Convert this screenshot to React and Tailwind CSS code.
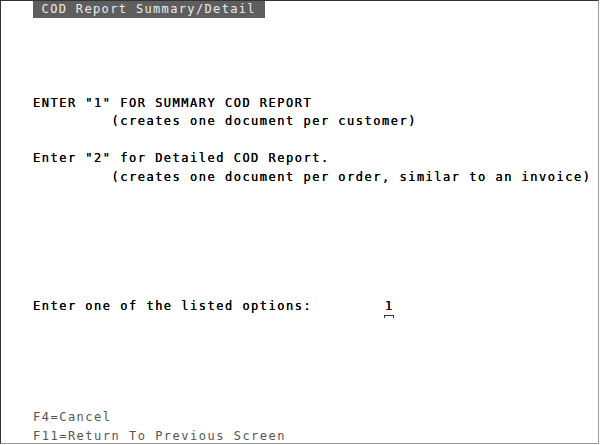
import React from "react";

const Row = ({ children, className = "" }) => (
  <div className={"h-[18.5px] leading-[18.5px] whitespace-pre " + className}>{children}</div>
);

export default function App() {
  return (
    <div className="w-[600px] h-[445px] bg-white">
      <div
        className="w-[599px] h-[444px] border-t border-l border-r border-b border-t-[#333] border-l-[#333] border-r-[#9a9a9a] border-b-[#9a9a9a] pl-[32px] text-[12px] tracking-[1.5px] text-black"
        style={{ fontFamily: '"DejaVu Sans Mono", "Liberation Mono", monospace' }}
      >
        <div className="h-[18.5px] flex items-start">
          <div className="h-[17px] leading-[17px] bg-[#5e5e5e] text-[#ececec] whitespace-pre tracking-[1.35px]">
            {" COD Report Summary/Detail "}
          </div>
        </div>
        <Row> </Row>
        <Row> </Row>
        <Row> </Row>
        <Row> </Row>
        <Row className="[text-shadow:0_0_0.25px_#000]">ENTER "1" FOR SUMMARY COD REPORT</Row>
        <Row className="[text-shadow:0_0_0.25px_#000]">{"         (creates one document per customer)"}</Row>
        <Row> </Row>
        <Row className="[text-shadow:0_0_0.25px_#000]">Enter "2" for Detailed COD Report.</Row>
        <Row className="[text-shadow:0_0_0.25px_#000]">{"         (creates one document per order, similar to an invoice)"}</Row>
        <Row> </Row>
        <Row> </Row>
        <Row> </Row>
        <Row> </Row>
        <Row> </Row>
        <Row> </Row>
        <Row className="[text-shadow:0_0_0.25px_#000]">
          {"Enter one of the listed options:        "}
          <span className="relative inline-block ml-[3px]">
            1
            <span className="absolute left-[-1px] bottom-[-2px] w-[10px] h-[3px] border-t border-l border-r border-[#333]" />
          </span>
        </Row>
        <Row> </Row>
        <Row> </Row>
        <Row> </Row>
        <Row> </Row>
        <Row> </Row>
        <Row className="text-[#555]">F4=Cancel</Row>
        <Row className="text-[#555]">F11=Return To Previous Screen</Row>
      </div>
    </div>
  );
}
